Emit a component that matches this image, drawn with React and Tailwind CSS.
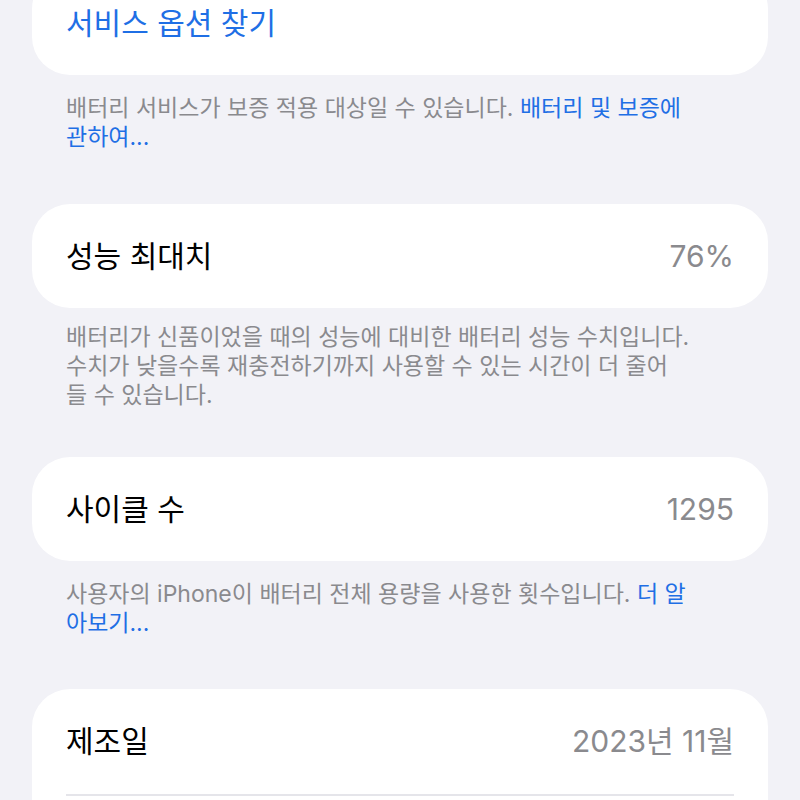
export default function App() {
    const card = "bg-white rounded-[38px] h-[104px] flex items-center justify-between px-[34px]";
    const footer = "px-[34px] text-[23px] leading-[29px] text-[#8a8a8e] whitespace-nowrap";
    const link = "text-[#1f6fe5]";

    return (
        <div className="h-[800px] overflow-hidden bg-[#f2f2f7] font-['Inter','Noto_Sans_CJK_KR',sans-serif]">
            <div className="px-8">
                {/* service options */}
                <section className="-mt-[29px]">
                    <div className={card}>
                        <span className="text-[30px] text-[#1f6fe5]">서비스 옵션 찾기</span>
                    </div>
                    <p className={`${footer} pt-[19px]`}>
                        배터리 서비스가 보증 적용 대상일 수 있습니다. <span className={link}>배터리 및 보증에</span>
                        <br />
                        <span className={link}>관하여...</span>
                    </p>
                </section>

                {/* maximum capacity */}
                <section className="mt-[52px]">
                    <div className={card}>
                        <span className="text-[30px] text-black">성능 최대치</span>
                        <span className="text-[30px] text-[#8a8a8e]">76%</span>
                    </div>
                    <p className={`${footer} pt-[15px]`}>
                        배터리가 신품이었을 때의 성능에 대비한 배터리 성능 수치입니다.
                        <br />
                        수치가 낮을수록 재충전하기까지 사용할 수 있는 시간이 더 줄어
                        <br />
                        들 수 있습니다.
                    </p>
                </section>

                {/* cycle count */}
                <section className="mt-[47px]">
                    <div className={card}>
                        <span className="text-[30px] text-black">사이클 수</span>
                        <span className="text-[30px] text-[#8a8a8e]">1295</span>
                    </div>
                    <p className={`${footer} pt-[19px]`}>
                        사용자의 iPhone이 배터리 전체 용량을 사용한 횟수입니다. <span className={link}>더 알</span>
                        <br />
                        <span className={link}>아보기...</span>
                    </p>
                </section>

                {/* manufacture date */}
                <section className="mt-[51px]">
                    <div className="bg-white rounded-[38px]">
                        <div className="h-[105px] flex items-center justify-between px-[34px]">
                            <span className="text-[30px] text-black">제조일</span>
                            <span className="text-[30px] text-[#8a8a8e]">2023년 11월</span>
                        </div>
                        <div className="mx-[34px] h-[2px] bg-[#e5e5ea]" />
                        <div className="h-[104px]" />
                    </div>
                </section>
            </div>
        </div>
    );
}
